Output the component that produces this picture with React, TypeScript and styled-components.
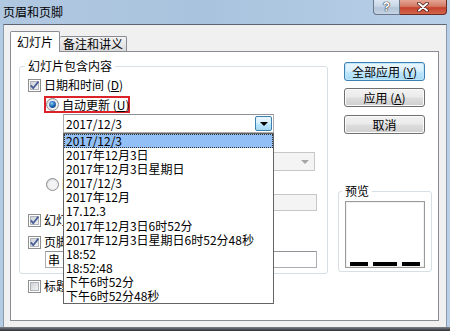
import React from 'react'
import styled, { createGlobalStyle } from 'styled-components'

const GlobalStyle = createGlobalStyle`
  html, body {
    margin: 0;
    padding: 0;
    background: #fff;
  }
  body {
    font-family: "Noto Sans CJK SC", "Liberation Sans", sans-serif;
    font-size: 12px;
    color: #000;
  }
`

const Window = styled.div`
  width: 450px;
  height: 331px;
  overflow: hidden;
  display: flex;
  flex-direction: column;
  background: linear-gradient(to right, #b4cbe4, #c3d7ec 70%, #b9cfe7);
`

const TitleBar = styled.div`
  height: 24px;
  flex: none;
  display: flex;
  align-items: flex-start;
  background: linear-gradient(to right, #b1c8e1 0%, #a9c3de 45%, #b8cfe8 100%);
`

const Title = styled.div`
  padding: 4px 0 0 3px;
  line-height: 16px;
  font-size: 12px;
`

const CaptionButtons = styled.div`
  margin-left: auto;
  margin-right: 3px;
  display: flex;
`

const CaptionButton = styled.div<{ $close?: boolean }>`
  width: ${p => (p.$close ? 47 : 27)}px;
  height: 15px;
  box-sizing: border-box;
  display: flex;
  align-items: center;
  justify-content: center;
  border: 1px solid ${p => (p.$close ? '#6b2c22' : '#6a7888')};
  border-top: none;
  border-left: ${p => (p.$close ? 'none' : '1px solid #6a7888')};
  border-radius: ${p => (p.$close ? '0 0 4px 0' : '0 0 0 4px')};
  background: ${p =>
    p.$close
      ? 'linear-gradient(to bottom, #e6a594 0%, #d27a66 45%, #c5432d 55%, #d3654c 100%)'
      : 'linear-gradient(to bottom, #dde7f2 0%, #c8d6e6 45%, #b4c5d9 55%, #c4d4e6 100%)'};
  color: #fff;
  font-family: "Liberation Sans", sans-serif;
  font-weight: bold;
  font-size: 12px;
  line-height: 13px;
  text-shadow: 0 0 1px #333, 0 0 1px #333, 0 0 1px #333;
`

const Client = styled.div`
  flex: 1;
  min-height: 0;
  margin: 0 3px;
  border-top: 1px solid #5c6672;
  border-left: 1px solid #8a9aad;
  border-right: 1px solid #8a9aad;
  background: #f0f0f0;
  padding: 6px 7px 6px 6px;
  display: flex;
  flex-direction: column;
`

const BottomEdge = styled.div`
  height: 4px;
  flex: none;
  background: linear-gradient(to bottom, #7d8288, #2c2f33);
`

const TabStrip = styled.div`
  height: 20px;
  flex: none;
  display: flex;
  align-items: flex-end;
`

const Tab = styled.div<{ $active?: boolean }>`
  position: relative;
  z-index: ${p => (p.$active ? 1 : 0)};
  box-sizing: border-box;
  width: ${p => (p.$active ? 50 : 67)}px;
  height: ${p => (p.$active ? 21 : 15)}px;
  margin-bottom: ${p => (p.$active ? -1 : 0)}px;
  border: 1px solid #898c95;
  border-bottom: none;
  border-left: ${p => (p.$active ? '1px solid #898c95' : 'none')};
  border-radius: 2px 2px 0 0;
  background: ${p =>
    p.$active ? '#fff' : 'linear-gradient(to bottom, #f3f3f3 0%, #e8e8e8 50%, #dadada 100%)'};
  text-align: center;
  line-height: ${p => (p.$active ? 20 : 14)}px;
  font-size: 12px;
`

const Panel = styled.div`
  flex: 1;
  min-height: 0;
  border: 1px solid #898c95;
  background: #fff;
  display: flex;
  gap: 10px;
  padding: 7px 6px 0 8px;
`

const LeftColumn = styled.div`
  width: 309px;
  display: flex;
  flex-direction: column;
`

const Group = styled.fieldset<{ $width: number }>`
  box-sizing: border-box;
  width: ${p => p.$width}px;
  min-width: 0;
  margin: 0;
  border: 1px solid #d5dfe5;
  border-radius: 3px;
  display: flex;
  flex-direction: column;
  align-items: flex-start;
`

const MainGroup = styled(Group)`
  padding: 0 9px 5px 8px;
`

const PreviewGroup = styled(Group)`
  margin-top: 50px;
  padding: 0 6px 3px 6px;
`

const Legend = styled.legend`
  padding: 0 3px;
  margin-left: -3px;
  line-height: 14px;
  font-size: 12px;
`

const Row = styled.div<{ $mt: number; $ml?: number }>`
  display: flex;
  align-items: center;
  gap: 3px;
  height: 16px;
  margin-top: ${p => p.$mt}px;
  margin-left: ${p => p.$ml ?? 0}px;
  white-space: nowrap;
  line-height: 16px;
`

const Highlight = styled.div`
  box-sizing: border-box;
  display: flex;
  align-items: center;
  gap: 3px;
  width: 86px;
  height: 17px;
  margin: 3px 0 0 16px;
  border: 2px solid #dd2128;
  white-space: nowrap;
  line-height: 13px;
`

const ComboWrap = styled.div`
  position: relative;
  margin: 1px 0 0 35px;
`

const Combo = styled.div<{ $width: number; $disabled?: boolean }>`
  box-sizing: border-box;
  width: ${p => p.$width}px;
  height: 19px;
  display: flex;
  align-items: center;
  padding-left: 2px;
  border: 1px solid ${p => (p.$disabled ? '#c5c8cb' : '#abadb3')};
  border-top-color: ${p => (p.$disabled ? '#c5c8cb' : '#8f9398')};
  background: ${p => (p.$disabled ? '#f4f4f4' : '#fff')};
  line-height: 17px;
  white-space: nowrap;
`

const ComboText = styled.span`
  flex: 1;
`

const DropButton = styled.div<{ $hot?: boolean; $disabled?: boolean }>`
  box-sizing: border-box;
  width: 17px;
  height: 15px;
  margin-right: 1px;
  display: flex;
  align-items: center;
  justify-content: center;
  border: 1px solid ${p => (p.$hot ? '#3c7fb1' : 'transparent')};
  border-radius: 2px;
  background: ${p =>
    p.$hot ? 'linear-gradient(to bottom, #eaf6fd 0%, #d7effc 45%, #bde6fd 55%, #a6d9f4 100%)' : 'transparent'};
  &::after {
    content: '';
    border-left: 4px solid transparent;
    border-right: 4px solid transparent;
    border-top: 4px solid ${p => (p.$disabled ? '#a6a6a6' : '#000')};
  }
`

const DropList = styled.ul`
  position: absolute;
  z-index: 5;
  top: 100%;
  left: 0;
  width: 211px;
  box-sizing: border-box;
  margin: 0;
  padding: 0;
  list-style: none;
  border: 1px solid #646464;
  background: #fff;
`

const DropItem = styled.li<{ $selected?: boolean }>`
  box-sizing: border-box;
  height: 14.1px;
  line-height: ${p => (p.$selected ? 12 : 14)}px;
  padding-left: ${p => (p.$selected ? 1 : 2)}px;
  border: ${p => (p.$selected ? '1px dotted #333' : 'none')};
  background: ${p => (p.$selected ? '#92bff5' : 'transparent')};
  white-space: nowrap;
`

const LabelRow = styled.div`
  display: flex;
  gap: 6px;
  margin-left: 35px;
  height: 19px;
  line-height: 19px;
  white-space: nowrap;
`

const ComboRow = styled.div`
  display: flex;
  gap: 6px;
  margin-left: 35px;
`

const TextBox = styled.div<{ $width: number; $ml: number; $mt: number; $disabled?: boolean }>`
  box-sizing: border-box;
  width: ${p => p.$width}px;
  height: 17px;
  margin: ${p => p.$mt}px 0 0 ${p => p.$ml}px;
  padding-left: 2px;
  border: 1px solid ${p => (p.$disabled ? '#c5c8cb' : '#abadb3')};
  border-top-color: ${p => (p.$disabled ? '#c5c8cb' : '#8f9398')};
  background: ${p => (p.$disabled ? '#f4f4f4' : '#fff')};
  line-height: 15px;
  white-space: nowrap;
`

const RightColumn = styled.div`
  width: 94px;
  display: flex;
  flex-direction: column;
`

const Button = styled.div<{ $default?: boolean; $mt: number }>`
  box-sizing: border-box;
  width: 81px;
  height: 19px;
  margin: ${p => p.$mt}px 0 0 6px;
  border: 1px solid ${p => (p.$default ? '#3c7fb1' : '#707070')};
  border-radius: 3px;
  background: ${p =>
    p.$default
      ? 'linear-gradient(to bottom, #eaf6fd 0%, #d9f0fc 45%, #bee6fd 55%, #a7d9f5 100%)'
      : 'linear-gradient(to bottom, #f2f2f2 0%, #ebebeb 45%, #dddddd 55%, #cfcfcf 100%)'};
  box-shadow: inset 0 0 0 1px ${p => (p.$default ? '#bfe7fb' : '#fbfbfb')};
  text-align: center;
  line-height: 17px;
  font-size: 12px;
  white-space: nowrap;
`

const PreviewBox = styled.div`
  box-sizing: border-box;
  width: 80px;
  height: 67px;
  margin-top: 3px;
  border: 1px solid #9a9a9a;
  box-shadow: inset 0 0 0 1px #f2f2f2;
  display: flex;
  align-items: flex-end;
  gap: 5px;
  padding: 0 4px 1px 4px;
`

const Dash = styled.div<{ $w: number }>`
  width: ${p => p.$w}px;
  height: 4px;
  background: #000;
`

const CheckBox: React.FC<{ checked?: boolean }> = ({ checked }) => (
  <svg width="13" height="13" viewBox="0 0 13 13" style={{ flex: 'none' }}>
    <defs>
      <linearGradient id="cbfill" x1="0" y1="0" x2="1" y2="1">
        <stop offset="0" stopColor="#cbcfd5" />
        <stop offset="1" stopColor="#f6f6f6" />
      </linearGradient>
    </defs>
    <rect x="0.5" y="0.5" width="12" height="12" fill="#fff" stroke="#8e8f8f" />
    <rect x="2.5" y="2.5" width="8" height="8" fill="url(#cbfill)" stroke="#b0b4ba" />
    {checked && (
      <path d="M2.8 6.4 L5.2 9.2 L10.4 2.6" fill="none" stroke="#4a5f97" strokeWidth="1.8" />
    )}
  </svg>
)

const Radio: React.FC<{ checked?: boolean }> = ({ checked }) => (
  <svg width="13" height="13" viewBox="0 0 13 13" style={{ flex: 'none' }}>
    <defs>
      <radialGradient id="rdot" cx="0.4" cy="0.35" r="0.7">
        <stop offset="0" stopColor="#9bd3f7" />
        <stop offset="0.5" stopColor="#2b77c4" />
        <stop offset="1" stopColor="#0f3f7d" />
      </radialGradient>
      <linearGradient id="rfill" x1="0" y1="0" x2="1" y2="1">
        <stop offset="0" stopColor="#cfd2d6" />
        <stop offset="1" stopColor="#fafafa" />
      </linearGradient>
    </defs>
    <circle cx="6.5" cy="6.5" r="6" fill="url(#rfill)" stroke="#8e8f8f" />
    <circle cx="6.5" cy="6.5" r="4.3" fill="#f4f4f4" />
    {checked && <circle cx="6.5" cy="6.5" r="3.4" fill="url(#rdot)" />}
  </svg>
)

const CloseGlyph = () => (
  <svg width="14" height="10" viewBox="0 0 14 10">
    <path d="M3 1.5 L11 8.5 M11 1.5 L3 8.5" stroke="#4a1a14" strokeWidth="3.6" strokeLinecap="round" />
    <path d="M3 1.5 L11 8.5 M11 1.5 L3 8.5" stroke="#fff" strokeWidth="2" strokeLinecap="round" />
  </svg>
)

// date formats offered by the open drop-down
const formats = [
  '2017/12/3',
  '2017年12月3日',
  '2017年12月3日星期日',
  '2017/12/3',
  '2017年12月',
  '17.12.3',
  '2017年12月3日6时52分',
  '2017年12月3日星期日6时52分48秒',
  '18:52',
  '18:52:48',
  '下午6时52分',
  '下午6时52分48秒',
]

const App: React.FC = () => {
  return (
    <>
      <GlobalStyle />
      <Window>
        <TitleBar>
          <Title>页眉和页脚</Title>
          <CaptionButtons>
            <CaptionButton>?</CaptionButton>
            <CaptionButton $close>
              <CloseGlyph />
            </CaptionButton>
          </CaptionButtons>
        </TitleBar>
        <Client>
          <TabStrip>
            <Tab $active>幻灯片</Tab>
            <Tab>备注和讲义</Tab>
          </TabStrip>
          <Panel>
            <LeftColumn>
              <MainGroup $width={309}>
                <Legend>幻灯片包含内容</Legend>
                <Row $mt={4}>
                  <CheckBox checked />
                  <span>日期和时间 (<u>D</u>)</span>
                </Row>
                <Highlight>
                  <Radio checked />
                  <span>自动更新 (<u>U</u>)</span>
                </Highlight>
                <ComboWrap>
                  <Combo $width={211}>
                    <ComboText>2017/12/3</ComboText>
                    <DropButton $hot />
                  </Combo>
                  <DropList>
                    {formats.map((f, i) => (
                      <DropItem key={i} $selected={i === 0}>
                        {f}
                      </DropItem>
                    ))}
                  </DropList>
                </ComboWrap>
                <LabelRow>
                  <span>语言(国家/地区)(L):</span>
                  <span>日历类型(C):</span>
                </LabelRow>
                <ComboRow>
                  <Combo $width={120} $disabled>
                    <ComboText>中文(中国)</ComboText>
                    <DropButton $disabled />
                  </Combo>
                  <Combo $width={126} $disabled>
                    <ComboText>公历</ComboText>
                    <DropButton $disabled />
                  </Combo>
                </ComboRow>
                <Row $mt={5} $ml={18}>
                  <Radio />
                  <span>固定(X)</span>
                </Row>
                <TextBox $width={254} $ml={35} $mt={2} $disabled />
                <Row $mt={1}>
                  <CheckBox checked />
                  <span>幻灯片编号(N)</span>
                </Row>
                <Row $mt={6}>
                  <CheckBox checked />
                  <span>页脚(F)</span>
                </Row>
                <TextBox $width={272} $ml={17} $mt={1}>
                  串
                </TextBox>
              </MainGroup>
              <Row $mt={4} $ml={9}>
                <CheckBox />
                <span>标题幻灯片中不显示(S)</span>
              </Row>
            </LeftColumn>
            <RightColumn>
              <Button $default $mt={3}>
                全部应用 (<u>Y</u>)
              </Button>
              <Button $mt={7}>
                应用 (<u>A</u>)
              </Button>
              <Button $mt={8}>取消</Button>
              <PreviewGroup $width={94}>
                <Legend>预览</Legend>
                <PreviewBox>
                  <Dash $w={18} />
                  <Dash $w={24} />
                  <Dash $w={18} />
                </PreviewBox>
              </PreviewGroup>
            </RightColumn>
          </Panel>
        </Client>
        <BottomEdge />
      </Window>
    </>
  )
}

export default App
